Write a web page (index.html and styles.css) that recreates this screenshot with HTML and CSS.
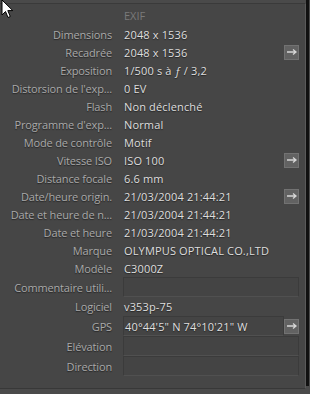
FILE: index.html
```html
<!DOCTYPE html>
<html>
<head>
<meta charset="utf-8" />
<title>EXIF</title>
<link rel="stylesheet" href="styles.css">
</head>
<body>
<div class="wrap">
	<div class="panel">
		<div class="head">EXIF</div>
		<div class="row"><span class="lab">Dimensions</span><span class="val">2048 x 1536</span></div>
		<div class="row"><span class="lab">Recadrée</span><span class="val">2048 x 1536</span><span class="btn"><svg width="12" height="8" viewBox="0 0 12 8"><path d="M1 4H10M7 1.5L10 4L7 6.5" fill="none" stroke="#d6d6d6" stroke-width="1.3"/></svg></span></div>
		<div class="row"><span class="lab">Exposition</span><span class="val">1/500 s à <i>ƒ</i> / 3,2</span></div>
		<div class="row"><span class="lab">Distorsion de l'exp...</span><span class="val">0 EV</span></div>
		<div class="row"><span class="lab">Flash</span><span class="val">Non déclenché</span></div>
		<div class="row"><span class="lab">Programme d'exp...</span><span class="val">Normal</span></div>
		<div class="row"><span class="lab">Mode de contrôle</span><span class="val">Motif</span></div>
		<div class="row"><span class="lab">Vitesse ISO</span><span class="val">ISO 100</span><span class="btn"><svg width="12" height="8" viewBox="0 0 12 8"><path d="M1 4H10M7 1.5L10 4L7 6.5" fill="none" stroke="#d6d6d6" stroke-width="1.3"/></svg></span></div>
		<div class="row"><span class="lab">Distance focale</span><span class="val">6.6 mm</span></div>
		<div class="row"><span class="lab">Date/heure origin.</span><span class="val">21/03/2004 21:44:21</span><span class="btn"><svg width="12" height="8" viewBox="0 0 12 8"><path d="M1 4H10M7 1.5L10 4L7 6.5" fill="none" stroke="#d6d6d6" stroke-width="1.3"/></svg></span></div>
		<div class="row"><span class="lab">Date et heure de n...</span><span class="val">21/03/2004 21:44:21</span></div>
		<div class="row"><span class="lab">Date et heure</span><span class="val">21/03/2004 21:44:21</span></div>
		<div class="row"><span class="lab">Marque</span><span class="val">OLYMPUS OPTICAL CO.,LTD</span></div>
		<div class="row"><span class="lab">Modèle</span><span class="val">C3000Z</span></div>
		<div class="row tall"><span class="lab">Commentaire utili...</span><span class="val box wide"></span></div>
		<div class="row mid"><span class="lab">Logiciel</span><span class="val">v353p-75</span></div>
		<div class="row tall"><span class="lab">GPS</span><span class="val box">40°44'5" N 74°10'21" W</span><span class="btn"><svg width="12" height="8" viewBox="0 0 12 8"><path d="M1 4H10M7 1.5L10 4L7 6.5" fill="none" stroke="#d6d6d6" stroke-width="1.3"/></svg></span></div>
		<div class="row tall"><span class="lab">Elévation</span><span class="val box wide"></span></div>
		<div class="row tall"><span class="lab">Direction</span><span class="val box wide"></span></div>
	</div>
	<div class="edge"></div>
</div>
<svg class="cursor" width="13" height="20" viewBox="0 0 13 20"><path d="M1 1V16L4.5 12.5L7 18.5L9.3 17.5L6.8 11.6H11.8Z" fill="#fff" stroke="#000" stroke-width="1"/></svg>
</body>
</html>
```

FILE: styles.css
```css
*{ margin:0; padding:0; box-sizing:border-box;}
body{ width:310px; height:394px; background:#4a4a4a; font-family:"Open Sans", "Noto Sans", sans-serif; font-size:11px; overflow:hidden; position:relative;}
.wrap{ display:flex; height:386px;}
.panel{ width:306px; height:386px; background:#464646; border-top:1px solid #3a3a3a; margin-top:3px; border-bottom:1px solid #383838; border-right:1px solid #5a5a5a; padding-top:3px;}
.edge{ width:3px; background:#111;}
.head{ height:18px; line-height:18px; padding-left:124px; color:#7a7a7a;}
.row{ display:grid; grid-template-columns:112px 1fr 15px; height:18px; align-items:center; padding-right:6px;}
.row.tall{ height:20px;}
.row.mid{ height:19px;}
.lab{ grid-column:1; text-align:right; color:#a9a9a9; white-space:nowrap; letter-spacing:-0.15px; text-shadow:0 1px 1px #252525;}
.val{ grid-column:2; margin-left:12px; color:#dedede; white-space:nowrap; letter-spacing:0.15px; text-shadow:0 1px 1px #252525;}
.val i{ font-style:italic;}
.box{ height:20px; line-height:19px; margin-left:11px; padding-left:1px; background:#444; border:1px solid #3b3b3b; border-bottom-color:#505050;}
.box.wide{ grid-column:2 / 4;}
.btn{ grid-column:3; width:15px; height:15px; background:#626262; border:1px solid #727272; display:flex; align-items:center; justify-content:center;}
.cursor{ position:absolute; left:1px; top:-1px;}
```
